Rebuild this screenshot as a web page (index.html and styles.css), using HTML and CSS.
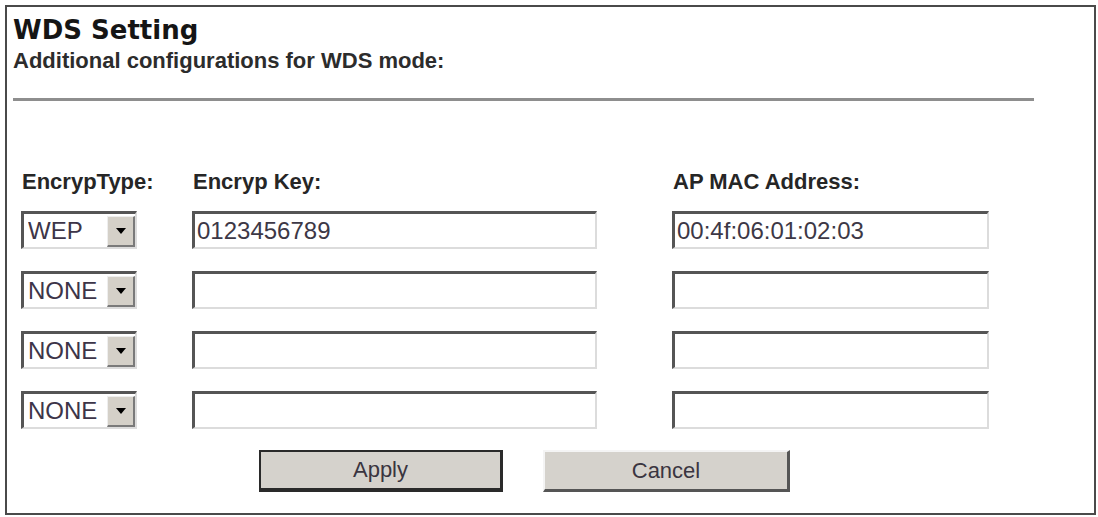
FILE: index.html
```html
<!DOCTYPE html>
<html lang="en">
<head>
  <meta charset="UTF-8" />
  <title>WDS Setting</title>
  <link rel="stylesheet" href="styles.css">
</head>
<body>
  <div class="frame">
    <h1 class="title">WDS Setting</h1>
    <p class="subtitle">Additional configurations for WDS mode:</p>
    <hr class="rule">

    <div class="wds-grid">
      <div class="label">EncrypType:</div>
      <div class="label">Encryp Key:</div>
      <div class="label">AP MAC Address:</div>

      <div class="select">
        <select><option selected>WEP</option><option>NONE</option></select>
        <span class="arrow"><svg width="10" height="6" viewBox="0 0 10 6"><polygon points="0,0 10,0 5,6" fill="#000"/></svg></span>
      </div>
      <input class="field key" type="text" value="0123456789">
      <input class="field mac" type="text" value="00:4f:06:01:02:03">

      <div class="select">
        <select><option>WEP</option><option selected>NONE</option></select>
        <span class="arrow"><svg width="10" height="6" viewBox="0 0 10 6"><polygon points="0,0 10,0 5,6" fill="#000"/></svg></span>
      </div>
      <input class="field key" type="text" value="">
      <input class="field mac" type="text" value="">

      <div class="select">
        <select><option>WEP</option><option selected>NONE</option></select>
        <span class="arrow"><svg width="10" height="6" viewBox="0 0 10 6"><polygon points="0,0 10,0 5,6" fill="#000"/></svg></span>
      </div>
      <input class="field key" type="text" value="">
      <input class="field mac" type="text" value="">

      <div class="select">
        <select><option>WEP</option><option selected>NONE</option></select>
        <span class="arrow"><svg width="10" height="6" viewBox="0 0 10 6"><polygon points="0,0 10,0 5,6" fill="#000"/></svg></span>
      </div>
      <input class="field key" type="text" value="">
      <input class="field mac" type="text" value="">
    </div>

    <div class="actions">
      <button class="btn default">Apply</button>
      <button class="btn">Cancel</button>
    </div>
  </div>
</body>
</html>
```

FILE: styles.css
```css
* { box-sizing: border-box; }
html, body {
  margin: 0;
  padding: 0;
  background: #fff;
  font-family: "Liberation Sans", Arial, sans-serif;
}
.frame {
  margin: 5px 0 0 5px;
  width: 1091px;
  height: 510px;
  border: 2px solid #4a4a4a;
  padding-top: 8px;
}
.title {
  margin: 0 0 0 6px;
  font-family: "DejaVu Sans", sans-serif;
  font-weight: bold;
  font-size: 26px;
  line-height: 30px;
  color: #151515;
}
.subtitle {
  margin: 3px 0 0 6px;
  font-weight: bold;
  font-size: 22px;
  line-height: 26px;
  color: #2c2c2c;
}
.rule {
  margin: 24px 0 0 6px;
  width: 1021px;
  height: 3px;
  border: none;
  background: #8e8e8e;
}
.wds-grid {
  display: grid;
  grid-template-columns: 171px 480px 317px;
  grid-template-rows: auto repeat(4, 38px);
  row-gap: 22px;
  padding-left: 14px;
  margin-top: 68px;
}
.label {
  font-weight: bold;
  font-size: 22px;
  line-height: 26px;
  height: 26px;
  color: #262626;
  padding-left: 1px;
  margin-bottom: -6px;
}
.select {
  width: 116px;
  height: 38px;
  display: flex;
  background: #fff;
  border-top: 3px solid #555;
  border-left: 3px solid #555;
  border-right: 2px solid #dcdcdc;
  border-bottom: 2px solid #dcdcdc;
}
.select select {
  appearance: none;
  -webkit-appearance: none;
  flex: 1;
  min-width: 0;
  border: none;
  background: transparent;
  font-family: "Liberation Sans", Arial, sans-serif;
  font-size: 24px;
  color: #3d3548;
  padding: 0 0 0 4px;
  outline: none;
}
.arrow {
  width: 28px;
  margin: 2px 0 0 0;
  background: #d4d0c8;
  border-top: 1px solid #eee;
  border-left: 1px solid #eee;
  border-right: 2px solid #7a7a7a;
  border-bottom: 2px solid #7a7a7a;
  display: flex;
  align-items: center;
  justify-content: center;
}
.field {
  height: 38px;
  padding: 0 0 0 2px;
  font-family: "Liberation Sans", Arial, sans-serif;
  font-size: 24px;
  color: #3d3846;
  background: #fff;
  border-top: 3px solid #555;
  border-left: 3px solid #555;
  border-right: 2px solid #dcdcdc;
  border-bottom: 2px solid #dcdcdc;
  outline: none;
}
.field.key { width: 405px; }
.field.mac { width: 317px; }
.actions {
  display: flex;
  gap: 40px;
  padding-left: 252px;
  margin-top: 21px;
}
.btn {
  height: 42px;
  width: 247px;
  background: #d5d2cc;
  font-family: "Liberation Sans", Arial, sans-serif;
  font-size: 22px;
  color: #3a3540;
  border-top: 2px solid #f4f4f4;
  border-left: 2px solid #f4f4f4;
  border-right: 3px solid #555;
  border-bottom: 3px solid #555;
}
.btn.default {
  width: 244px;
  border: 2px solid #2a2a2a;
  border-right-width: 3px;
  border-bottom-width: 4px;
}
```
